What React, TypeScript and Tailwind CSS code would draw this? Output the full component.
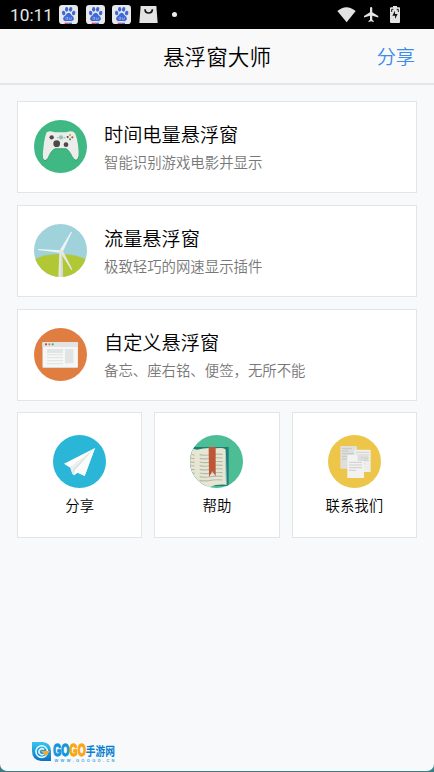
import type { ReactNode } from "react";

function Disc({ id, x, y, color, children }: { id: string; x: number; y: number; color: string; children: ReactNode }) {
  return (
    <svg className="block size-[53px] shrink-0" viewBox={`${x} ${y} 159 159`} aria-hidden="true">
      <defs>
        <clipPath id={id}>
          <circle cx={x + 79.5} cy={y + 79.5} r="79.5" />
        </clipPath>
      </defs>
      <g clipPath={`url(#${id})`}>
        <rect x={x} y={y} width="159" height="159" fill={color} />
        {children}
      </g>
    </svg>
  );
}

function GamepadIcon() {
  return (
    <Disc id="pad" x={72} y={77} color="#3fb883">
      <path d="M108 119Q111 112 122 112L135 115H168L181 112Q192 112 196 119Q204 141 207 174Q208 198 198 199Q192 199 187 189Q179 171 168 165H136Q124 170 116 187Q110 201 104 200Q97 198 99 176Q101 142 108 119Z" fill="#389f73" />
      <path d="M108 118Q111 111 122 111L135 114H168L181 111Q192 111 196 118Q204 140 206 171Q207 195 198 196Q192 196 187 186Q179 168 168 162H136Q124 167 116 184Q110 198 104 197Q97 195 99 173Q101 141 108 118Z" fill="#ececeb" />
      <circle cx="125" cy="129" r="6.5" fill="#4c4b49" />
      <circle cx="140" cy="148" r="10" fill="#4c4b49" />
      <circle cx="168" cy="151" r="7" fill="#4c4b49" />
      <circle cx="153" cy="129" r="6.5" fill="#8fc9ad" />
      <path d="M141 130H146M161 130H166" stroke="#b3bdb7" strokeWidth="4" />
      <circle cx="180" cy="122" r="3.2" fill="#c9ac31" />
      <circle cx="173" cy="128" r="3.2" fill="#4d4a4d" />
      <circle cx="187" cy="129" r="3.2" fill="#bd4d38" />
      <circle cx="180" cy="135" r="3.2" fill="#479669" />
    </Disc>
  );
}

function WindmillIcon() {
  return (
    <Disc id="mill" x={72} y={72} color="#a0d2dc">
      <path d="M65 182Q101 162 151 162Q202 162 238 183V240H65Z" fill="#b1c834" />
      <path d="M148 156H156L159 232H145Z" fill="#e5e9e5" />
      <path d="M153 156H156L159 232H152Z" fill="#d4dcd4" />
      <path d="M148 153L183 95L186 96L157 158Z" fill="#f0f3f2" />
      <path d="M152 151L84 147V150L149 158Z" fill="#f0f3f2" />
      <path d="M149 155L184 210L187 208L158 151Z" fill="#e2e8e0" />
      <circle cx="152" cy="154" r="5" fill="#e4e8e6" />
    </Disc>
  );
}

function BrowserIcon() {
  return (
    <Disc id="web" x={72} y={69} color="#e07d40">
      <rect x="97" y="111" width="107" height="78" rx="4" fill="#d9d9d5" />
      <rect x="99" y="125" width="104" height="61" rx="2" fill="#f5f6f5" />
      <rect x="97" y="111" width="107" height="15" rx="3" fill="#e1e4e2" />
      <circle cx="108" cy="118" r="3.2" fill="#be4542" />
      <circle cx="118" cy="118" r="3.2" fill="#df7949" />
      <circle cx="128" cy="118" r="3.2" fill="#3aab8a" />
      <path d="M111 132H159V144H111ZM165 132H190V175H165Z" fill="#e0e4e3" />
      <path d="M111 149H159M111 158H159M111 167H159M111 176H159" stroke="#d9dddc" strokeWidth="2.5" />
    </Disc>
  );
}

function PlaneIcon() {
  return (
    <Disc id="plane" x={129} y={90} color="#29b6d7">
      <path d="M255 129L162 176L181 188L187 207L193 211L202 203L224 213Z" fill="#fff" />
      <path d="M255 129L181 187L190 211L195 195Z" fill="#dadfe2" />
      <path d="M255 129L181 187L187 203L193 189Z" fill="#edf0f1" />
      <path d="M255 129L195 196L224 213Z" fill="#fafcfc" />
    </Disc>
  );
}

function BookIcon() {
  return (
    <Disc id="book" x={121} y={90} color="#4dbd96">
      <path d="M115 126H237V243H115Z" fill="#1e7f7a" />
      <path d="M115 134Q130 130 142 134Q170 126 198 130Q220 127 226 132L229 239Q200 237 180 246Q155 251 115 248Z" fill="#e6e6d3" />
      <path d="M227 133L230 240" stroke="#f3f3e6" strokeWidth="2" />
      {[148, 159, 170, 181, 192, 203, 214, 225].map((y) => (
        <path key={y} d={`M150 ${y + 1}Q163 ${y + 4} 176 ${y + 2}Q198 ${y - 2} 219 ${y}M115 ${y}L135 ${y + 2}`} fill="none" stroke="#b8b9ae" strokeWidth="3.4" />
      ))}
      <path d="M177 126H198V214L188 199L178 217Z" fill="#bd5737" />
    </Disc>
  );
}

function PagesIcon() {
  return (
    <Disc id="pages" x={129} y={90} color="#ecc549">
      <path d="M166 123H216V191H166Z" fill="#dedfdd" />
      <path d="M171 131H200M171 138H190M171 146H210M171 154H210M171 162H202" stroke="#bebfbd" strokeWidth="2.3" />
      <path d="M207 134H257V201H207Z" fill="#eeefed" />
      <path d="M212 142H252M212 150H252M220 158H252M220 167H252M230 176H240" stroke="#c9cac8" strokeWidth="2.3" />
      <path d="M220 154H250V165H229Z" fill="#d7d8d6" />
      <path d="M187 150H218L237 168V219H187Z" fill="#f2f2f0" />
      <path d="M218 150V168H237Z" fill="#dcdddb" />
      <path d="M192 172H231M192 180H231M192 188H231M192 196H213" stroke="#c2c3c1" strokeWidth="2.3" />
    </Disc>
  );
}

function PawBadge() {
  return (
    <svg className="size-[19px]" viewBox="0 0 57 57" aria-hidden="true">
      <rect width="57" height="57" rx="10" fill="#e8e8ea" />
      <g fill="#3d68d6">
        <ellipse cx="14" cy="24" rx="5" ry="7" transform="rotate(-15 14 24)" />
        <ellipse cx="23" cy="13" rx="5" ry="7" />
        <ellipse cx="35" cy="13" rx="5" ry="7" transform="rotate(10 35 13)" />
        <ellipse cx="44" cy="24" rx="5" ry="7" transform="rotate(15 44 24)" />
        <path d="M29 23Q34 23 37 30Q46 36 45 43Q42 50 34 48H23Q14 50 12 42Q12 36 20 31Q23 23 29 23Z" />
      </g>
      <path d="M26 36V43H22Q19 40 22 37H26M31 37V43H37V37" fill="none" stroke="#c4cff0" strokeWidth="1.6" />
      <path d="M17 53H28V57H17Z" fill="#e5484d" />
      <path d="M28 53H39V57H28Z" fill="#4173df" />
    </svg>
  );
}

function StatusBar() {
  return (
    <div className="flex h-[29px] items-center bg-black pl-[10px] pr-[33px] text-[#e7e7e7]">
      <span className="w-[49px] pt-[2px] font-[Roboto,sans-serif] text-[17.3px] font-normal leading-[27px]">10:11</span>
      <div className="flex gap-[7.5px]">
        <PawBadge />
        <PawBadge />
        <PawBadge />
        <svg className="h-[19px] w-[19px]" viewBox="0 0 57 57" aria-hidden="true">
          <path d="M5 3H52L56 54H1Z" fill="#e3e3e3" />
          <path d="M18 13Q18 24 29 24Q40 24 40 13" fill="none" stroke="#151515" strokeWidth="5" />
        </svg>
      </div>
      <span className="ml-[14px] size-[5px] rounded-full bg-[#ededed]" />
      <svg className="ml-auto h-[17px] w-[19px]" viewBox="0 0 57 51" aria-hidden="true">
        <path d="M1 15Q28-8 56 15L29 49Z" fill="#e3e3e3" />
      </svg>
      <svg className="ml-[8px] size-[15px]" viewBox="2 2 20 20" aria-hidden="true">
        <path d="M21 16v-2l-8-5V3.5a1.5 1.5 0 0 0-3 0V9l-8 5v2l8-2.5V19l-2 1.5V22l3.5-1 3.5 1v-1.5L13 19v-5.5z" fill="#e3e3e3" />
      </svg>
      <svg className="ml-[10px] h-[17px] w-[12px]" viewBox="0 0 36 51" aria-hidden="true">
        <path d="M12 0H24V4H31Q33 4 33 7V48Q33 51 30 51H6Q3 51 3 48V7Q3 4 6 4H12Z" fill="#e3e3e3" />
        <path d="M18 14V24H26L18 39V29H10Z" fill="#101010" />
        <path d="M8 18V10H13M28 18V10H23" fill="none" stroke="#222" strokeWidth="3" />
      </svg>
    </div>
  );
}

function FeatureCard({ icon, title, text }: { icon: ReactNode; title: string; text: string }) {
  return (
    <div className="flex h-[92px] gap-[17px] border border-[#e2e4e5] bg-white px-4 pt-[18.4px]">
      {icon}
      <div>
        <h2 className="text-[19.2px] leading-7 text-black">{title}</h2>
        <p className="text-[14.4px] leading-7 text-[#777]">{text}</p>
      </div>
    </div>
  );
}

function TileCard({ icon, label }: { icon: ReactNode; label: string }) {
  return (
    <div className="flex h-[125.5px] flex-col items-center border border-[#e2e4e5] bg-white pt-[21.5px]">
      {icon}
      <span className="mt-[6.4px] text-[14.4px] leading-[22px] text-black">{label}</span>
    </div>
  );
}

function SiteLogo() {
  return (
    <svg className="h-[21px] w-[85px]" viewBox="0 0 85 21" aria-label="GOGO手游网">
      <defs>
        <linearGradient id="blue" x2="0" y2="1">
          <stop stopColor="#38c5ee" />
          <stop offset="1" stopColor="#0871c5" />
        </linearGradient>
        <linearGradient id="gold" x2="0" y2="1">
          <stop stopColor="#ffc016" />
          <stop offset="1" stopColor="#f18708" />
        </linearGradient>
      </defs>
      <path d="M0 0H11Q19 1 19 9V19H9Q0 18 0 9Z" fill="url(#blue)" />
      <circle cx="9.7" cy="9.6" r="5.8" fill="none" stroke="#e8faff" strokeWidth="1.6" />
      <path d="M12 7.5A3 3 0 1 0 12 12" fill="none" stroke="#d9f6ff" strokeWidth="1.5" />
      <path d="M9 9H18L14 14L12 12Z" fill="#f6a92b" />
      <g className="font-['Liberation_Sans',sans-serif] font-bold" fontSize="17">
        <text transform="translate(21.3 14.4) scale(.61 1)" fill="#1496dc" stroke="#1496dc" strokeWidth="1.3">GO</text>
        <text transform="translate(37.6 14.4) scale(.61 1)" fill="#fca50c" stroke="#fca50c" strokeWidth="1.3">GO</text>
      </g>
      <text transform="translate(53.8 13.6) scale(.79 1)" className="font-['Noto_Sans_CJK_SC',sans-serif] font-bold" fontSize="12.3" fill="#087fce">手游网</text>
      <text x="22.5" y="20" className="font-['Liberation_Sans',sans-serif] font-bold" fontSize="4" textLength="60" fill="#36a4dc">WWW.GOOGO.CN</text>
    </svg>
  );
}

export default function App() {
  return (
    <div className="h-[772px] w-[434px] overflow-hidden bg-[#397d85] font-['Noto_Sans_CJK_SC',sans-serif] font-[350]">
      <div className="flex h-[771px] flex-col rounded-b-[7px] bg-[#f8f9fb]">
        <StatusBar />
        <header className="grid h-[56px] grid-cols-[1fr_auto_1fr] items-center border-b-2 border-[#e5e6e7] bg-[#f9f9f9] px-[19px]">
          <h1 className="col-start-2 text-[21.6px] leading-8 text-black">悬浮窗大师</h1>
          <a className="justify-self-end text-[19.2px] leading-8 text-[#3c8cec]">分享</a>
        </header>
        <main className="flex flex-col gap-[11.8px] px-[17px] pt-4">
          <FeatureCard icon={<GamepadIcon />} title="时间电量悬浮窗" text="智能识别游戏电影并显示" />
          <FeatureCard icon={<WindmillIcon />} title="流量悬浮窗" text="极致轻巧的网速显示插件" />
          <FeatureCard icon={<BrowserIcon />} title="自定义悬浮窗" text="备忘、座右铭、便签，无所不能" />
          <div className="grid grid-cols-3 gap-3">
            <TileCard icon={<PlaneIcon />} label="分享" />
            <TileCard icon={<BookIcon />} label="帮助" />
            <TileCard icon={<PagesIcon />} label="联系我们" />
          </div>
        </main>
        <footer className="mt-auto pb-[8px] pl-[32px]">
          <SiteLogo />
        </footer>
      </div>
    </div>
  );
}
